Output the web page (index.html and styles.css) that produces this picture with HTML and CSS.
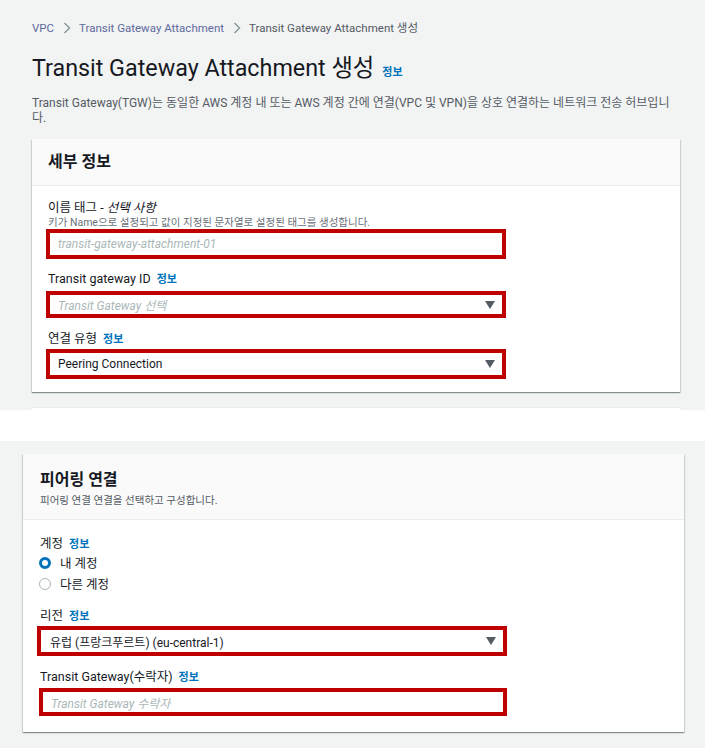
FILE: index.html
```html
<!DOCTYPE html>
<html lang="ko">
<head>
<meta charset="utf-8">
<link rel="stylesheet" href="styles.css">
</head>
<body>
<section class="shot shot-top">
  <nav class="crumbs">
    <a class="crumb-link">VPC</a>
    <span class="chev"><svg width="8" height="12" viewBox="0 0 8 12"><path d="M1.5 1l5 5-5 5" fill="none" stroke="#879596" stroke-width="1.4"/></svg></span>
    <a class="crumb-link">Transit Gateway Attachment</a>
    <span class="chev"><svg width="8" height="12" viewBox="0 0 8 12"><path d="M1.5 1l5 5-5 5" fill="none" stroke="#879596" stroke-width="1.4"/></svg></span>
    <span class="crumb-cur">Transit Gateway Attachment 생성</span>
  </nav>
  <h1 class="page-title">Transit Gateway Attachment 생성 <a class="info info-title">정보</a></h1>
  <p class="page-desc">Transit Gateway(TGW)는 동일한 AWS 계정 내 또는 AWS 계정 간에 연결(VPC 및 VPN)을 상호 연결하는 네트워크 전송 허브입니다.</p>

  <div class="card card-a">
    <div class="card-head head-a"><h2 class="card-title">세부 정보</h2></div>
    <div class="card-body body-a">
      <div class="label l1">이름 태그 - <i>선택 사항</i></div>
      <div class="hint">키가 Name으로 설정되고 값이 지정된 문자열로 설정된 태그를 생성합니다.</div>
      <div class="field f1"><span class="ph">transit-gateway-attachment-01</span></div>
      <div class="label l2">Transit gateway ID <a class="info">정보</a></div>
      <div class="field f2"><span class="ph">Transit Gateway 선택</span><span class="caret"></span></div>
      <div class="label l3">연결 유형 <a class="info">정보</a></div>
      <div class="field f3"><span class="val">Peering Connection</span><span class="caret"></span></div>
    </div>
  </div>
  <div class="card card-a card-next"></div>
</section>

<div class="gap-band"></div>

<section class="shot shot-bottom">
  <div class="card card-b">
    <div class="card-head head-b">
      <h2 class="card-title">피어링 연결</h2>
      <div class="head-desc">피어링 연결 연결을 선택하고 구성합니다.</div>
    </div>
    <div class="card-body body-b">
      <div class="label m1">계정 <a class="info">정보</a></div>
      <div class="radio-row r1"><span class="radio on"></span><span>내 계정</span></div>
      <div class="radio-row r2"><span class="radio"></span><span>다른 계정</span></div>
      <div class="label m2">리전 <a class="info">정보</a></div>
      <div class="field g1"><span class="val">유럽 (프랑크푸르트) (eu-central-1)</span><span class="caret"></span></div>
      <div class="label m3">Transit Gateway(수락자) <a class="info">정보</a></div>
      <div class="field g2"><span class="ph">Transit Gateway 수락자</span></div>
    </div>
  </div>
</section>
</body>
</html>
```

FILE: styles.css
```css
* { box-sizing: border-box; }
html, body { margin: 0; padding: 0; background: #ffffff; }
body {
  width: 705px;
  font-family: "Roboto", "Noto Sans CJK KR", sans-serif;
  color: #16191f;
}
a { text-decoration: none; cursor: pointer; }

.shot { background: #f2f3f3; overflow: hidden; }
.shot-top { height: 410px; padding: 20px 25px 0 32px; }
.gap-band { height: 31px; background: #ffffff; }
.shot-bottom { height: 307px; padding: 13px 21px 0 23px; }

.crumbs {
  display: flex;
  align-items: center;
  height: 16px;
  font-size: 11.5px;
  line-height: 16px;
}
.crumb-link { color: #5f6b9e; }
.crumb-cur { color: #545b64; }
.chev { display: inline-flex; margin: 0 8px 0 9px; }

.page-title {
  margin: 17px 0 0;
  font-size: 23.3px;
  font-weight: 400;
  line-height: 30px;
  color: #16191f;
  display: flex;
  align-items: baseline;
}
.info {
  color: #0073bb;
  font-size: 11px;
  font-weight: 700;
  margin-left: 6px;
}
.info-title { margin-left: 8px; }

.page-desc {
  margin: 8px 0 0;
  width: 642px;
  font-size: 12px;
  line-height: 15px;
  color: #545b64;
}

.card {
  background: #ffffff;
  box-shadow: 0 1px 1px 0 rgba(0, 28, 36, 0.3), 1px 1px 1px 0 rgba(0, 28, 36, 0.12), -1px 1px 1px 0 rgba(0, 28, 36, 0.12);
}
.card-a { width: 648px; margin-top: 13px; }
.card-next { height: 20px; margin-top: 16px; box-shadow: 0 0 1px rgba(0,28,36,0.2); }
.card-b { width: 661px; height: 278px; }

.card-head {
  background: #fafafa;
  border-bottom: 1px solid #eaeded;
}
.head-a { height: 47px; padding: 12px 16px 0; }
.head-b { height: 66px; padding: 15px 17px 0; }
.card-title {
  margin: 0;
  font-size: 16px;
  font-weight: 700;
  line-height: 22px;
  color: #16191f;
}
.head-desc {
  margin-top: 3px;
  font-size: 10.5px;
  line-height: 14px;
  color: #545b64;
}

.body-a { padding: 14px 16px 13px; }
.body-b { padding: 16px 17px 16px; }

.label {
  font-size: 12.5px;
  line-height: 16px;
  color: #16191f;
  display: flex;
  align-items: baseline;
}
.label i { margin-left: 3px; }
.hint {
  font-size: 10.5px;
  line-height: 13px;
  color: #687078;
}

.field {
  position: relative;
  display: flex;
  align-items: center;
  justify-content: space-between;
  width: 460px;
  border: 4px solid #c00000;
  background: #ffffff;
  padding: 0 7px 0 8px;
  font-size: 12px;
}
.ph { color: #aab7b8; font-style: italic; }
.val { color: #16191f; }
.caret {
  width: 0; height: 0;
  border-left: 5px solid transparent;
  border-right: 5px solid transparent;
  border-top: 8px solid #545b64;
}

.f1 { margin: 0 0 0 -2px; height: 30px; }
.l2 { margin-top: 12px; }
.f2 { margin: 3px 0 0 -2px; height: 27px; }
.l3 { margin-top: 13px; }
.f3 { margin: 1px 0 0 -2px; height: 30px; }

.radio-row {
  display: flex;
  align-items: center;
  height: 21px;
  font-size: 12.5px;
  color: #16191f;
}
.radio {
  width: 12px; height: 12px;
  border-radius: 50%;
  border: 1px solid #aab7b8;
  margin: 0 9px 0 -1px;
  background: #fff;
}
.radio.on { border: 3.5px solid #0073bb; }
.r1 { margin-top: -1px; }
.m2 { margin-top: 14px; }
.g1 { margin: 1px 0 0 -3px; height: 30px; width: 470px; padding-left: 9px; }
.m3 { margin-top: 13px; }
.g2 { margin: 2px 0 0 -1px; height: 28px; width: 468px; padding-left: 8px; }
```
